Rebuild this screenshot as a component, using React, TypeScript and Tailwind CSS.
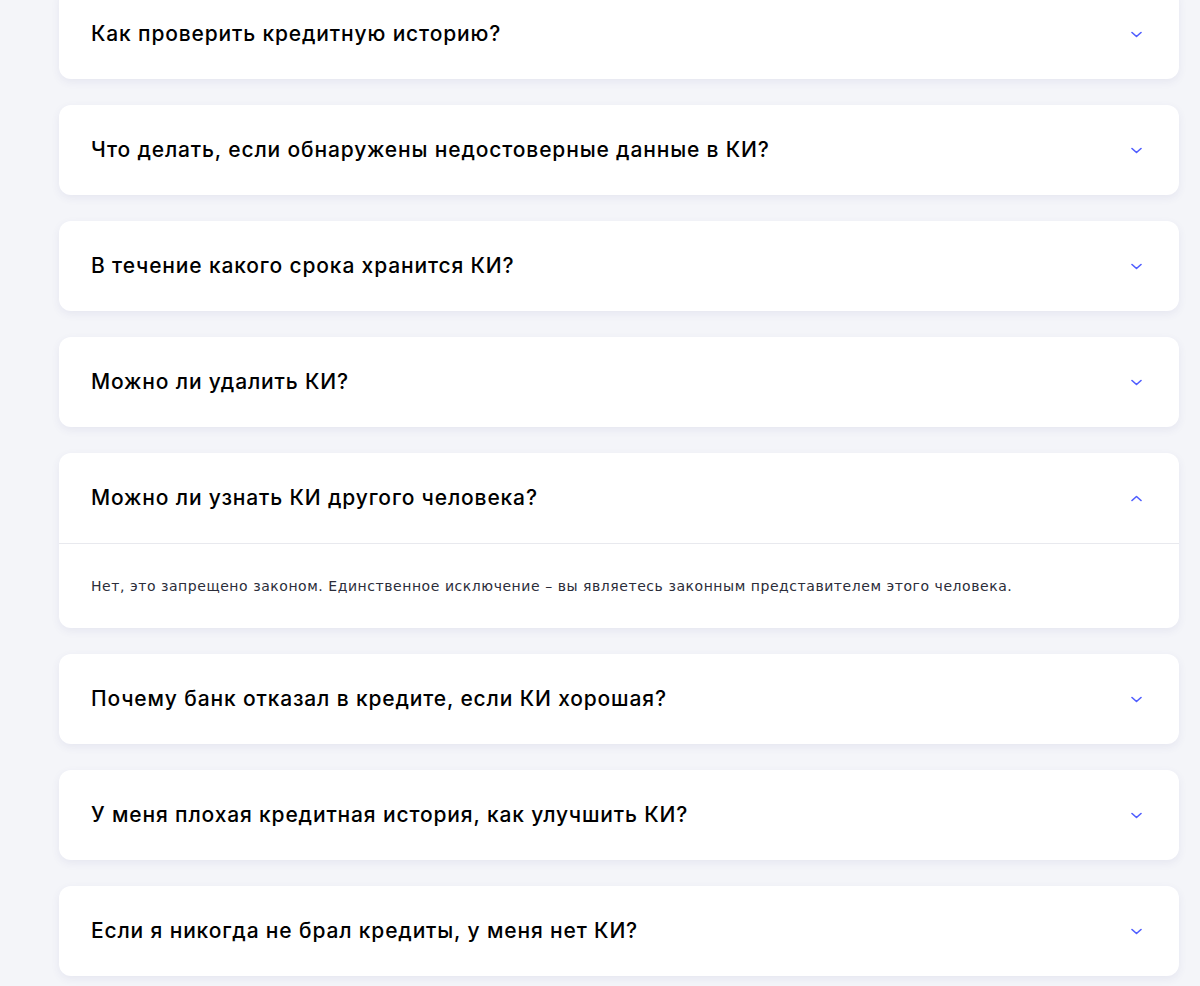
import { useState } from "react";

const QUESTIONS: { q: string; a: string }[] = [
  { q: "Как проверить кредитную историю?", a: "" },
  { q: "Что делать, если обнаружены недостоверные данные в КИ?", a: "" },
  { q: "В течение какого срока хранится КИ?", a: "" },
  { q: "Можно ли удалить КИ?", a: "" },
  {
    q: "Можно ли узнать КИ другого человека?",
    a: "Нет, это запрещено законом. Единственное исключение – вы являетесь законным представителем этого человека.",
  },
  { q: "Почему банк отказал в кредите, если КИ хорошая?", a: "" },
  { q: "У меня плохая кредитная история, как улучшить КИ?", a: "" },
  { q: "Если я никогда не брал кредиты, у меня нет КИ?", a: "" },
];

function Chevron({ up }: { up: boolean }) {
  return (
    <svg width="11" height="7" viewBox="0 0 11 7" fill="none" className={up ? "rotate-180" : ""}>
      <polyline points="1,1.5 5.5,5.5 10,1.5" stroke="#4f5dff" strokeWidth="1.6" strokeLinecap="round" strokeLinejoin="round" />
    </svg>
  );
}

export default function App() {
  const [open, setOpen] = useState<number>(4);

  return (
    <div className="min-h-[986px] bg-[#f4f5f9] overflow-hidden" style={{ fontFamily: "Inter, 'Noto Sans', sans-serif" }}>
      <div className="w-[1120px] ml-[59px] -mt-[11px] flex flex-col gap-[26px]">
        {QUESTIONS.map((item, i) => (
          <div key={item.q} className="bg-white rounded-[12px] shadow-[0_3px_8px_rgba(60,70,140,0.08)]">
            <button
              onClick={() => setOpen(open === i ? -1 : i)}
              className="w-full h-[90px] flex items-center justify-between pl-8 pr-[37px] text-left"
            >
              <span className="text-[21px] font-medium text-black tracking-[0.85px]">{item.q}</span>
              <Chevron up={open === i} />
            </button>
            {open === i && (
              <div className="border-t border-[#e8e9ee] px-8 py-8">
                <p className="text-[14px] leading-[20px] text-[#2b2d3a] tracking-[0.55px] font-['DejaVu_Sans',sans-serif]">{item.a}</p>
              </div>
            )}
          </div>
        ))}
      </div>
    </div>
  );
}
